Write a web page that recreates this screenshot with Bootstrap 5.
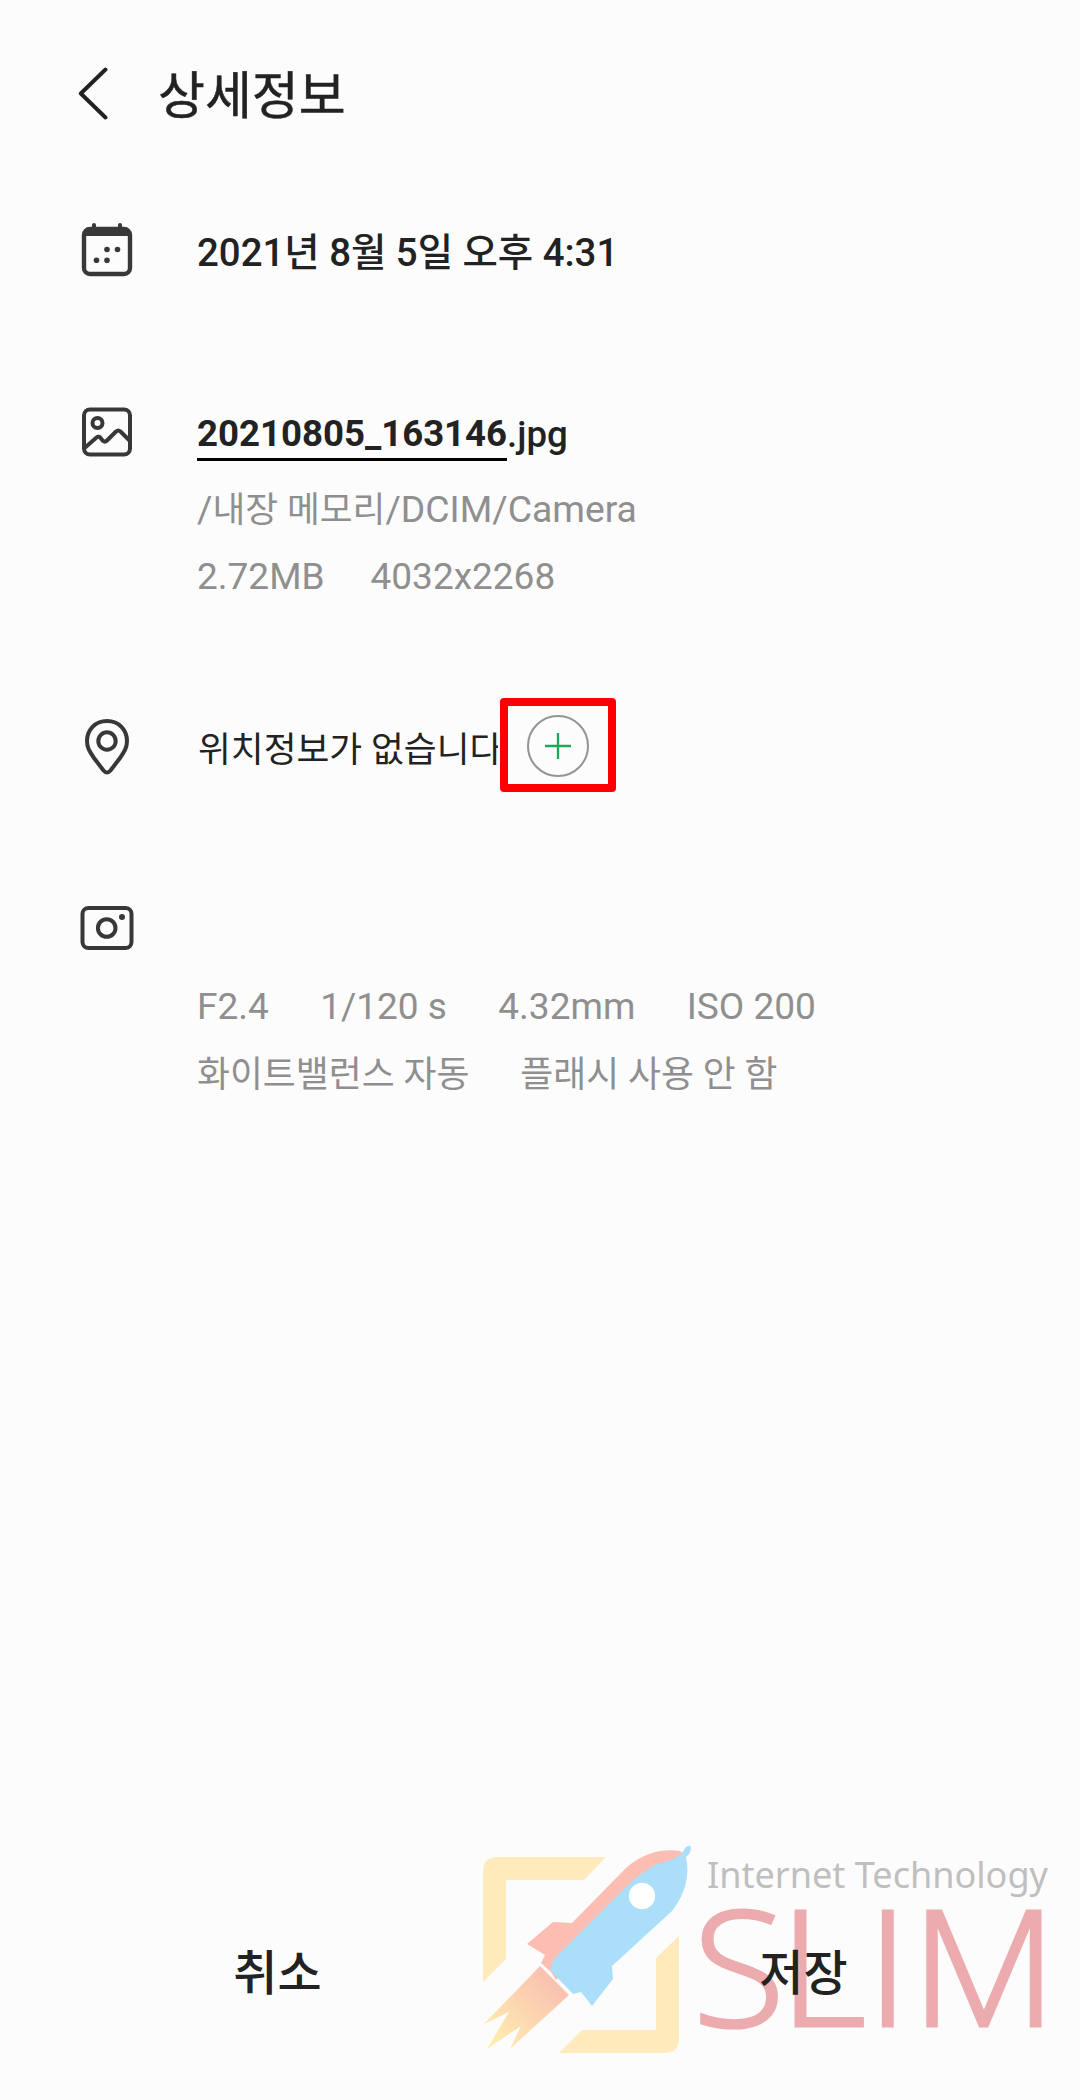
<!DOCTYPE html>
<html lang="ko">
<head>
<meta charset="utf-8">
<meta name="viewport" content="width=device-width, initial-scale=1">
<title>상세정보</title>
<link href="https://cdn.jsdelivr.net/npm/bootstrap@5.3.0/dist/css/bootstrap.min.css" rel="stylesheet">
<style>
body{background:#fcfcfc;color:#222;font-family:Roboto,"Noto Sans CJK KR",sans-serif;font-size:37px;line-height:50px}
.screen{width:1080px;height:2100px;overflow:hidden}
.topbar{height:158px;padding:58px 0 0 78px}
.page-title{font-size:51px;line-height:78px;font-weight:400;-webkit-text-stroke:.5px #222;margin-left:50px}
.info-row{padding-left:80px}
.info-icon{width:54px;flex:none;margin-right:63px}
.info-icon svg,.topbar svg,.add-btn svg{display:block}
.strong-text{font-weight:500}
.muted-text{color:#8f8f8f}
.ko{font-size:35.7px}
.date-line{font-size:38.4px;padding-top:6px}
.file-line{font-size:36.6px;padding-top:5px}
.file-name{font-weight:700;border-bottom:3px solid #000;line-height:48px}
.path-line{height:68px;font-size:37.3px;margin-top:23px}
.size-line{gap:46px}
.r-date{height:182px;padding-top:64px}
.r-file{height:314px;padding-top:65px}
.r-place{height:204px;padding-top:44px}
.r-place .info-icon{padding-top:19px}
.r-camera{height:220px;padding-top:46px}
.place-line{margin:0 2px 0 1px;width:300px;white-space:nowrap;overflow:hidden;padding-top:27px}
.add-box{width:116px;height:94px;border:8px solid #fe0000;border-radius:4px;padding:1px 1px 0 0}
.add-btn{width:62px;height:62px;border:2px solid #949494;border-radius:50%;background:none;padding:0}
.camera-lines{padding-top:78px}
.exif-line{gap:51.400px}
.exif-ko{gap:51px;margin-top:18px;font-size:35.8px}
.actions{height:216px}
.action-btn{font-size:48px;line-height:70px;font-weight:500;color:#222;width:50%;height:180px;border:0;background:none;padding:0}
.btn-save{padding-right:13px}
.btn-cancel{padding-left:15px}
.brand{right:1px;bottom:30px;z-index:0;overflow:visible}
</style>
</head>
<body>
<main class="screen position-relative d-flex flex-column">
  <header class="topbar d-flex align-items-start">
    <svg width="30" height="70" viewBox="0 0 30 70"><path d="M27.500 11.500 L2.800 35.500 L27.500 59.500" fill="none" stroke="#222" stroke-width="3.900" stroke-linecap="round" stroke-linejoin="round"/></svg>
    <h1 class="page-title mb-0">상세정보</h1>
  </header>

  <section class="info-row r-date d-flex">
    <div class="info-icon"><svg width="54" height="56" viewBox="0 0 54 56"><path d="M14 3v5M40 3v5" stroke="#383838" stroke-width="4" stroke-linecap="round"/><rect x="4" y="7" width="46" height="45" rx="6" fill="none" stroke="#383838" stroke-width="4.400"/><path d="M4 14V11q0-5 5-5h36q5 0 5 5v3z" fill="#383838"/><g fill="#383838"><circle cx="27" cy="27.500" r="2.800"/><circle cx="37.500" cy="27.500" r="2.800"/><circle cx="16.500" cy="38.300" r="2.800"/><circle cx="27" cy="38.300" r="2.800"/></g></svg></div>
    <div class="strong-text date-line">2021년 8월 5일 오후 4:31</div>
  </section>

  <section class="info-row r-file d-flex">
    <div class="info-icon"><svg width="54" height="54" viewBox="0 0 54 54"><g fill="none" stroke="#383838" stroke-width="4" stroke-linejoin="round"><rect x="4" y="4.500" width="46" height="45" rx="6"/><circle cx="17.500" cy="18" r="5"/><path d="M4 43.500L16.500 32.500q2.500-2 4.500 1l2 2.500q2 1.500 4-.5L36 26.500q2.300-2 4.500 0l9 9"/></g></svg></div>
    <div>
      <div class="d-flex strong-text file-line"><span class="file-name">20210805_163146</span><span>.jpg</span></div>
      <div class="muted-text path-line">/<span class="ko">내장 메모리</span>/DCIM/Camera</div>
      <div class="muted-text d-flex size-line"><span>2.72MB</span><span>4032x2268</span></div>
    </div>
  </section>

  <section class="info-row r-place d-flex">
    <div class="info-icon"><svg width="54" height="62" viewBox="0 0 54 62"><g fill="none" stroke="#383838" stroke-width="4"><path d="M27 4C14.500 4 7 13.500 7 24c0 7 3 11 7 17l9.500 12.500q3.500 4 7 0L40 41c4-6 7-10 7-17C47 13.500 39.500 4 27 4z"/><circle cx="27" cy="24" r="8.700"/></g></svg></div>
    <div class="ko place-line">위치정보가 없습니다</div>
    <div class="add-box d-flex align-items-center justify-content-center"><button class="add-btn d-flex align-items-center justify-content-center" aria-label="추가"><svg width="26" height="26" viewBox="0 0 26 26"><path d="M13 0v26M0 13h26" stroke="#20a65a" stroke-width="2.300"/></svg></button></div>
  </section>

  <section class="info-row r-camera d-flex">
    <div class="info-icon"><svg width="54" height="48" viewBox="0 0 54 48"><rect x="2.500" y="4" width="49" height="40" rx="6" fill="none" stroke="#383838" stroke-width="4"/><circle cx="26.700" cy="24" r="8.800" fill="none" stroke="#383838" stroke-width="4"/><circle cx="42" cy="13" r="3" fill="#383838"/></svg></div>
    <div class="muted-text camera-lines">
      <div class="d-flex exif-line"><span>F2.4</span><span>1/120 s</span><span>4.32mm</span><span>ISO 200</span></div>
      <div class="d-flex ko exif-ko"><span>화이트밸런스 자동</span><span>플래시 사용 안 함</span></div>
    </div>
  </section>

  <svg class="brand position-absolute" width="610" height="240" viewBox="0 0 610 240" aria-label="Internet Technology SLIM">
    <defs><linearGradient id="flame" x1="90" y1="145" x2="22" y2="215" gradientUnits="userSpaceOnUse"><stop offset="0" stop-color="#f9bdb0"/><stop offset="1" stop-color="#feefb0"/></linearGradient></defs>
    <g fill="#feeaba"><path d="M137 27L115 50H37V129L14 152V42Q14 27 29 27z"/><path d="M210 106V208Q210 223 195 223H90L113 200H187V128z"/></g>
    <path d="M72 133L76 125L58 114L84 92L103 93L157 38Q181 17 211 21L215 24Q215 34 196 39L87 150L82 142z" fill="#fcbdb2"/>
    <path d="M82 141Q82 134 86 128L157 57Q172 42 188 34Q204 31 213 23L217 17Q222 14 222 18Q222 23 217 27Q223 55 203 81L143 136L144 149L123 176L112 162L104 164z" fill="#abdef9"/>
    <circle cx="173" cy="66" r="13.200" fill="#fff"/>
    <path d="M71 136L100 165L41 219L52 196L18 219L40 182L15 194z" fill="url(#flame)"/>
    <text x="238" y="58" textLength="341" lengthAdjust="spacingAndGlyphs" font-family="'Noto Sans','Open Sans',sans-serif" font-size="36" fill="#bfbfbf">Internet Technology</text>
    <text transform="scale(1.050 1)" x="213 295.500 378.500 421" y="196" font-family="'Open Sans',sans-serif" font-weight="300" font-size="161" fill="#ecacaf" stroke="#ecacaf" stroke-width="3.200">SLIM</text>
  </svg>

  <footer class="actions d-flex align-items-start mt-auto position-relative">
    <button class="action-btn btn-cancel">취소</button>
    <button class="action-btn btn-save">저장</button>
  </footer>
</main>
<script src="https://cdn.jsdelivr.net/npm/bootstrap@5.3.0/dist/js/bootstrap.bundle.min.js"></script>
</body>
</html>
